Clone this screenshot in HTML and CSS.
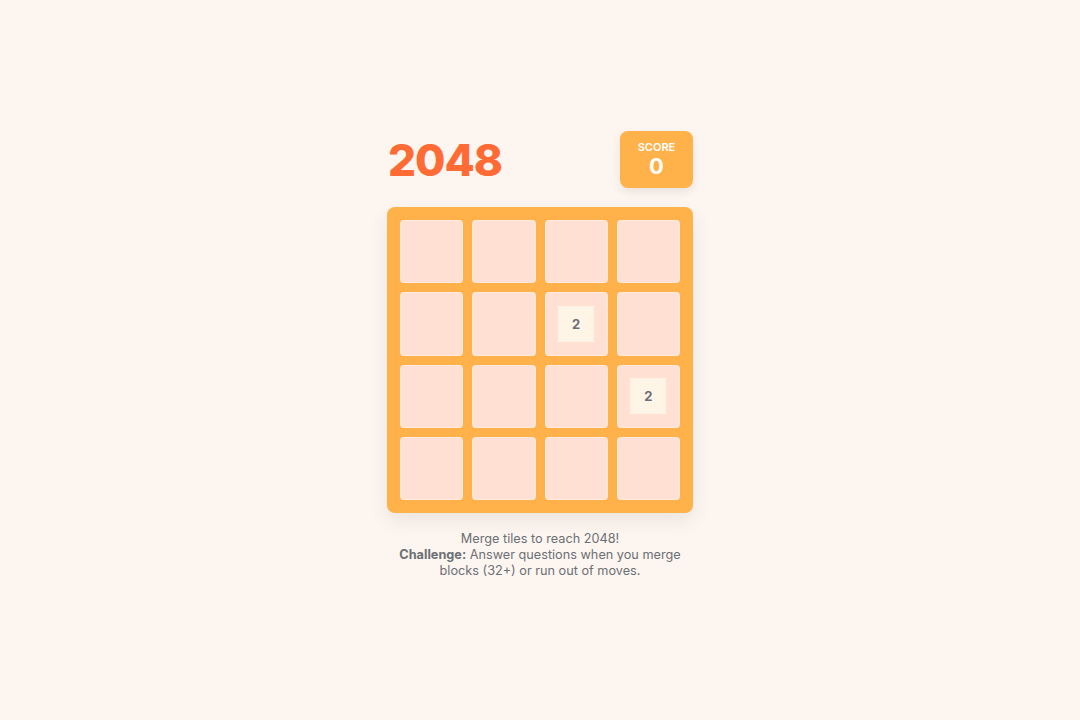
FILE: index.html
```html
<!DOCTYPE html>
<html lang="en">
<head>
<meta charset="utf-8">
<title>2048</title>
<link rel="stylesheet" href="styles.css">
</head>
<body>
<main class="game">
  <header class="header">
    <h1 class="title">2048</h1>
    <div class="score">
      <div class="score-label">SCORE</div>
      <div class="score-value">0</div>
    </div>
  </header>
  <div class="board">
    <div class="cell"></div>
    <div class="cell"></div>
    <div class="cell"></div>
    <div class="cell"></div>
    <div class="cell"></div>
    <div class="cell"></div>
    <div class="cell"><div class="tile">2</div></div>
    <div class="cell"></div>
    <div class="cell"></div>
    <div class="cell"></div>
    <div class="cell"></div>
    <div class="cell"><div class="tile">2</div></div>
    <div class="cell"></div>
    <div class="cell"></div>
    <div class="cell"></div>
    <div class="cell"></div>
  </div>
  <p class="help">Merge tiles to reach 2048!<br><strong>Challenge:</strong> Answer questions when you merge blocks (32+) or run out of moves.</p>
</main>
</body>
</html>
```

FILE: styles.css
```css
* { box-sizing: border-box; }
html, body { margin: 0; padding: 0; }
body {
  width: 1080px;
  height: 720px;
  background: #fdf5f0;
  font-family: Inter, "Noto Sans", sans-serif;
  display: flex;
  justify-content: center;
  align-items: flex-start;
}
.game {
  width: 306px;
  margin-top: 131px;
  display: flex;
  flex-direction: column;
}
.header {
  display: flex;
  justify-content: space-between;
  align-items: center;
  margin-bottom: 19px;
}
.title {
  margin: 0 0 0 1px;
  font-size: 44px;
  font-weight: 800;
  color: #ff6b35;
  letter-spacing: -1px;
  line-height: 1;
}
.score {
  width: 73px;
  height: 57px;
  background: #ffb14a;
  border-radius: 8px;
  box-shadow: 0 4px 10px rgba(0,0,0,0.08);
  color: #fff;
  display: flex;
  flex-direction: column;
  align-items: center;
  justify-content: center;
}
.score-label {
  font-size: 11px;
  font-weight: 600;
  line-height: 13px;
}
.score-value {
  font-size: 22px;
  font-weight: 700;
  line-height: 24px;
}
.board {
  width: 306px;
  height: 306px;
  background: #ffb14a;
  border-radius: 8px;
  padding: 13px;
  display: grid;
  grid-template-columns: repeat(4, 1fr);
  grid-template-rows: repeat(4, 1fr);
  gap: 9px;
  box-shadow: 0 8px 20px rgba(0,0,0,0.07);
}
.cell {
  background: #ffe0d2;
  border: 1px solid rgba(255,255,255,0.35);
  border-radius: 4px;
  display: flex;
  align-items: center;
  justify-content: center;
}
.tile {
  width: 36px;
  height: 36px;
  background: #fff5e6;
  color: #6b6f76;
  font-size: 13px;
  font-weight: 700;
  display: flex;
  align-items: center;
  justify-content: center;
}
.help {
  margin: 18px 0 0;
  text-align: center;
  font-size: 12.7px;
  line-height: 16px;
  color: #6b7075;
}
.help strong { font-weight: 700; }
```
